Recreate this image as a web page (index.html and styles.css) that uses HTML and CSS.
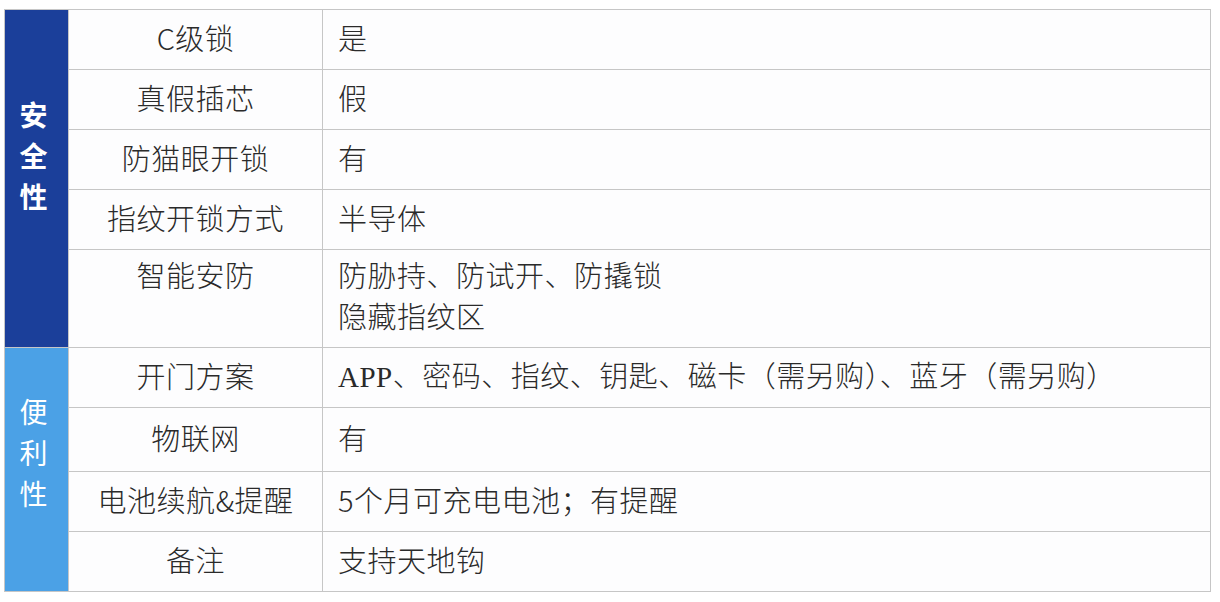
FILE: index.html
```html
<!DOCTYPE html>
<html lang="zh-CN">
<head>
<meta charset="utf-8">
<title>智能锁参数</title>
<link rel="stylesheet" href="styles.css">
</head>
<body>
<table class="spec">
  <colgroup>
    <col class="c-cat">
    <col class="c-name">
    <col class="c-val">
  </colgroup>
  <tbody>
    <tr class="r60">
      <td class="cat cat-safe" rowspan="5"><div class="vert">安<br>全<br>性</div></td>
      <td class="name">C级锁</td>
      <td class="val">是</td>
    </tr>
    <tr class="r60">
      <td class="name">真假插芯</td>
      <td class="val">假</td>
    </tr>
    <tr class="r60">
      <td class="name">防猫眼开锁</td>
      <td class="val">有</td>
    </tr>
    <tr class="r60">
      <td class="name">指纹开锁方式</td>
      <td class="val">半导体</td>
    </tr>
    <tr class="r98">
      <td class="name top">智能安防</td>
      <td class="val top">防胁持、防试开、防撬锁<br>隐藏指纹区</td>
    </tr>
    <tr class="r60">
      <td class="cat cat-conv" rowspan="4"><div class="vert thin">便<br>利<br>性</div></td>
      <td class="name">开门方案</td>
      <td class="val"><span class="latin">APP</span>、密码、指纹、钥匙、磁卡（需另购）、蓝牙（需另购）</td>
    </tr>
    <tr class="r64">
      <td class="name">物联网</td>
      <td class="val">有</td>
    </tr>
    <tr class="r60">
      <td class="name">电池续航&amp;提醒</td>
      <td class="val">5个月可充电电池；有提醒</td>
    </tr>
    <tr class="r60">
      <td class="name">备注</td>
      <td class="val">支持天地钩</td>
    </tr>
  </tbody>
</table>
</body>
</html>
```

FILE: styles.css
```css
html, body {
  margin: 0;
  padding: 0;
  background: #ffffff;
}
body {
  padding: 9px 0 0 4px;
  font-family: "Noto Sans CJK SC", "Liberation Sans", sans-serif;
  color: #2a2a2a;
}
.spec {
  border-collapse: collapse;
  table-layout: fixed;
  width: 1207px;
  font-size: 29px;
  font-weight: 300;
  letter-spacing: 0.5px;
  background: #fdfdfe;
}
.c-cat { width: 64px; }
.c-name { width: 254px; }
.spec td {
  border: 1px solid #c6c6c6;
  padding: 0 0 4px 0;
  line-height: 41px;
  vertical-align: middle;
}
.r60 { height: 60px; }
.r64 { height: 64px; }
.r98 { height: 98px; }
.name {
  text-align: center;
}
.val {
  text-align: left;
  padding-left: 15px !important;
}
.spec td.top {
  vertical-align: top;
  padding-top: 4px;
}
.latin {
  font-family: "Liberation Serif", serif;
  letter-spacing: 0.5px;
}
.cat {
  color: #ffffff;
  text-align: center;
  vertical-align: top !important;
}
.cat-safe {
  background: #1b3f9a;
}
.cat-conv {
  background: #4ba1e6;
}
.vert {
  font-size: 28px;
  font-weight: 700;
  letter-spacing: 0;
  line-height: 41px;
  padding-right: 6px;
}
.cat-safe .vert {
  padding-top: 84px;
}
.cat-conv .vert {
  padding-top: 43px;
}
.vert.thin {
  font-weight: 400;
}
```
